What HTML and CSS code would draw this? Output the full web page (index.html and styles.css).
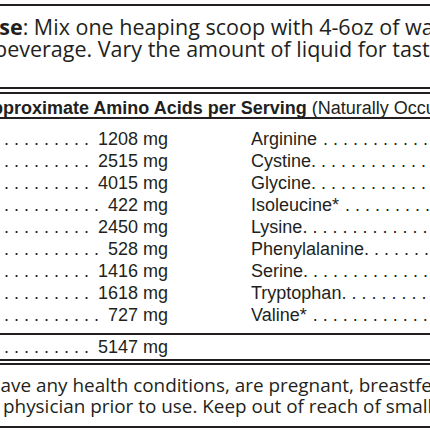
FILE: index.html
```html
<!DOCTYPE html>
<html lang="en">
  <head>
    <meta charset="UTF-8" />
    <meta name="viewport" content="width=device-width, initial-scale=1.0" />
    <title>Supplement Label</title>
    <link rel="stylesheet" href="styles.css">
  </head>
  <body>
    <div class="label">
      <section class="usage">
        <p class="usage-line usage-line--first"><strong>Use</strong>: Mix one heaping scoop with 4-6oz of water or your favorite</p>
        <p class="usage-line usage-line--second">beverage. Vary the amount of liquid for taste.</p>
      </section>

      <section class="amino">
        <h2 class="amino-title"><strong>Approximate Amino Acids per Serving</strong> (Naturally Occurring)</h2>

        <div class="amino-list">
          <div class="amino-row">
            <div class="amino-cell amino-cell--left"><span class="amino-name">Alanine</span><span class="leader"></span><span class="amino-value">1208 mg</span></div>
            <div class="amino-cell"><span class="amino-name">Arginine</span><span class="leader leader--spaced"></span></div>
          </div>
          <div class="amino-row">
            <div class="amino-cell amino-cell--left"><span class="amino-name">Aspartic Acid</span><span class="leader"></span><span class="amino-value">2515 mg</span></div>
            <div class="amino-cell"><span class="amino-name">Cystine</span><span class="leader"></span></div>
          </div>
          <div class="amino-row">
            <div class="amino-cell amino-cell--left"><span class="amino-name">Glutamic Acid</span><span class="leader"></span><span class="amino-value">4015 mg</span></div>
            <div class="amino-cell"><span class="amino-name">Glycine</span><span class="leader"></span></div>
          </div>
          <div class="amino-row">
            <div class="amino-cell amino-cell--left"><span class="amino-name">Histidine</span><span class="leader"></span><span class="amino-value">422 mg</span></div>
            <div class="amino-cell"><span class="amino-name">Isoleucine*</span><span class="leader leader--spaced"></span></div>
          </div>
          <div class="amino-row">
            <div class="amino-cell amino-cell--left"><span class="amino-name">Leucine*</span><span class="leader"></span><span class="amino-value">2450 mg</span></div>
            <div class="amino-cell"><span class="amino-name">Lysine</span><span class="leader"></span></div>
          </div>
          <div class="amino-row">
            <div class="amino-cell amino-cell--left"><span class="amino-name">Methionine</span><span class="leader"></span><span class="amino-value">528 mg</span></div>
            <div class="amino-cell"><span class="amino-name">Phenylalanine</span><span class="leader"></span></div>
          </div>
          <div class="amino-row">
            <div class="amino-cell amino-cell--left"><span class="amino-name">Proline</span><span class="leader"></span><span class="amino-value">1416 mg</span></div>
            <div class="amino-cell"><span class="amino-name">Serine</span><span class="leader"></span></div>
          </div>
          <div class="amino-row">
            <div class="amino-cell amino-cell--left"><span class="amino-name">Threonine</span><span class="leader"></span><span class="amino-value">1618 mg</span></div>
            <div class="amino-cell"><span class="amino-name">Tryptophan</span><span class="leader"></span></div>
          </div>
          <div class="amino-row">
            <div class="amino-cell amino-cell--left"><span class="amino-name">Tyrosine</span><span class="leader"></span><span class="amino-value">727 mg</span></div>
            <div class="amino-cell"><span class="amino-name">Valine*</span><span class="leader leader--spaced"></span></div>
          </div>
        </div>

        <div class="amino-total">
          <div class="amino-row">
            <div class="amino-cell amino-cell--left"><span class="amino-name">*BCAAs</span><span class="leader"></span><span class="amino-value">5147 mg</span></div>
            <div class="amino-cell"></div>
          </div>
        </div>
      </section>

      <section class="warning">
        <p class="warning-line warning-line--first">have any health conditions, are pregnant, breastfeeding or taking medication,</p>
        <p class="warning-line warning-line--second">physician prior to use. Keep out of reach of small children.</p>
      </section>
    </div>
  </body>
</html>
```

FILE: styles.css
```css
body {
  margin: 0;
  padding: 0;
  background-color: #fff;
  color: #231f20;
  overflow: hidden;
}

.label {
  margin-top: 4px;
  border-top: 2px solid #231f20;
}

/* directions */

.usage {
  font-family: "Open Sans", sans-serif;
  font-size: 21.5px;
  line-height: 22px;
  padding: 10px 0 27px;
  border-bottom: 2px solid #231f20;
  white-space: nowrap;
  overflow: hidden;
}

.usage-line {
  margin: 0;
}

.usage-line--first {
  text-indent: -17px;
}

.usage-line--second {
  text-indent: -6px;
}

/* amino acid table */

.amino {
  margin-top: 3px;
  border-top: 2px solid #231f20;
  font-family: "Liberation Sans", Arial, sans-serif;
}

.amino-title {
  margin: 0;
  padding-top: 5px;
  font-size: 18px;
  font-weight: normal;
  line-height: 18px;
  white-space: nowrap;
  overflow: hidden;
  text-indent: -21px;
  border-bottom: 2px solid #231f20;
}

.amino-list {
  padding: 9px 0 7px;
}

.amino-total {
  padding: 1px 0;
  border-top: 2px solid #231f20;
  border-bottom: 2px solid #231f20;
}

.amino-row {
  display: grid;
  grid-template-columns: 282px 1fr;
  column-gap: 83px;
  margin-left: -114px;
  font-size: 18px;
  line-height: 22px;
}

.amino-cell {
  display: flex;
  min-width: 0;
  overflow: hidden;
  white-space: nowrap;
}

.leader {
  flex: 1;
  min-width: 0;
  overflow: hidden;
}

.leader::after {
  content: ". . . . . . . . . . . . . . . . . . . . . . . . . . . . . . . .";
}

.leader--spaced {
  padding-left: 6px;
}

.amino-cell--left .leader {
  direction: rtl;
  padding-right: 9px;
}

/* warning */

.warning {
  margin-top: 2px;
  padding: 10px 0 9px;
  border-top: 2px solid #231f20;
  border-bottom: 2px solid #231f20;
  font-family: "Open Sans", sans-serif;
  font-size: 18.9px;
  line-height: 21px;
  white-space: nowrap;
  overflow: hidden;
}

.warning-line {
  margin: 0;
}

.warning-line--first {
  text-indent: -11px;
}

.warning-line--second {
  text-indent: 3px;
}
```
